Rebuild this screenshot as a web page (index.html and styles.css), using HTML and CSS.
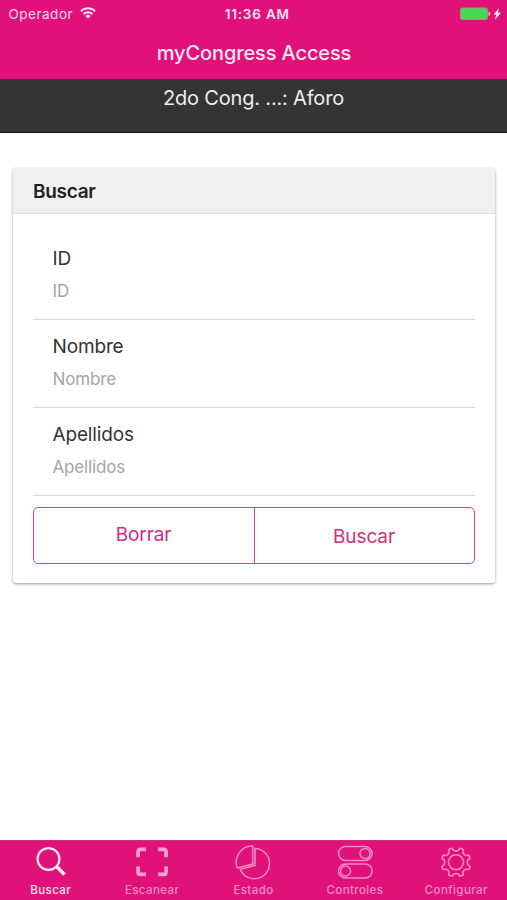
FILE: index.html
```html
<!DOCTYPE html>
<html lang="es">
<head>
<meta charset="utf-8">
<title>myCongress Access</title>
<link rel="stylesheet" href="styles.css">
</head>
<body>
<header class="top">
  <div class="status">
    <div class="carrier"><span>Operador</span>
      <svg width="16" height="12" viewBox="0 0 16 12" fill="none" stroke="currentColor" stroke-width="2"><path d="M1 4.200a10 10 0 0 1 14 0M3.400 7.100a6.500 6.500 0 0 1 9.200 0"/><path d="M8 11.500 5.300 9a3.900 3.900 0 0 1 5.400 0z" fill="currentColor" stroke="none"/></svg>
    </div>
    <span class="time">11:36 AM</span>
    <svg class="battery" width="42" height="14" viewBox="0 0 42 14"><rect x="1.500" y="1" width="27" height="11.500" rx="1.800" fill="#44d952" stroke="#b08b80"/><path d="M29.500 4.800q2 0 2 2t-2 2z" fill="#f5b4d4"/><path d="M40 1 34.500 7.800h2.700l-1.200 5L42 5.800h-3z" fill="#ffe3f1"/></svg>
  </div>
  <h1 class="title">myCongress Access</h1>
</header>
<div class="event"><span>2do Cong. ...: Aforo</span></div>
<main class="content">
  <section class="card">
    <h2 class="card-title"><span>Buscar</span></h2>
    <form class="form">
      <div class="field"><span class="label">ID</span><span class="hint">ID</span></div>
      <div class="field"><span class="label">Nombre</span><span class="hint">Nombre</span></div>
      <div class="field"><span class="label">Apellidos</span><span class="hint">Apellidos</span></div>
      <div class="actions"><button type="button"><span>Borrar</span></button><button type="button" class="search"><span>Buscar</span></button></div>
    </form>
  </section>
</main>
<nav class="tabs">
  <a class="tab active"><svg width="36" height="36" viewBox="0 0 36 36" fill="none" stroke="currentColor"><circle cx="15.500" cy="15" r="10.900" stroke-width="2.200"/><path d="m23.200 22.200 8.300 8.300" stroke-width="3.600"/></svg><span>Buscar</span></a>
  <a class="tab"><svg width="36" height="36" viewBox="0 0 36 36" fill="none" stroke="#fb9dcf" stroke-width="3.800"><path d="M4.100 13.300V8q0-2.600 2.600-2.600h5.300M24.200 5.400h5.300q2.600 0 2.600 2.600v5.300M32.100 22.500v5.300q0 2.600-2.600 2.600h-5.300M12 30.400H6.700q-2.600 0-2.600-2.600v-5.300"/></svg><span>Escanear</span></a>
  <a class="tab"><svg width="36" height="36" viewBox="0 0 36 36" fill="none" stroke="currentColor" stroke-width="1.500"><path d="M17.700 2.100v18L2.300 23.900A16 16 0 0 1 17.700 2.100zM20 4.400a15.200 15.200 0 1 1-14.800 20.800L20 21.500z"/></svg><span>Estado</span></a>
  <a class="tab"><svg width="36" height="36" viewBox="0 0 36 36" fill="none" stroke="currentColor" stroke-width="1.500"><rect x="1.500" y="2.400" width="33.600" height="14" rx="7"/><circle cx="28.100" cy="9.400" r="5"/><rect x="1.500" y="20" width="33.600" height="14" rx="7"/><circle cx="8.500" cy="27" r="5"/></svg><span>Controles</span></a>
  <a class="tab"><svg width="36" height="36" viewBox="0 0 36 36" fill="none" stroke="currentColor" stroke-width="1.500" stroke-linejoin="round"><circle cx="18" cy="18.300" r="7.500"/><path d="M14.200 4.300C15.500 7.900 20.500 7.900 21.800 4.300Q24.100 4.500 25.300 5.700C23.700 9.200 27.100 12.600 30.600 11Q31.800 12.200 32 14.500C28.400 15.800 28.400 20.800 32 22.100Q31.800 24.400 30.600 25.600C27.100 24 23.700 27.400 25.300 30.900Q24.100 32.100 21.800 32.300C20.500 28.700 15.500 28.700 14.200 32.300Q11.900 32.100 10.700 30.900C12.300 27.400 8.900 24 5.400 25.600Q4.200 24.400 4 22.100C7.600 20.800 7.600 15.800 4 14.500Q4.200 12.200 5.400 11C8.900 12.600 12.300 9.200 10.700 5.700Q11.900 4.500 14.200 4.300Z"/></svg><span>Configurar</span></a>
</nav>
</body>
</html>
```

FILE: styles.css
```css
* { box-sizing: border-box; }
body {
  margin: 0;
  height: 900px;
  display: flex;
  flex-direction: column;
  background: #fff;
  font-family: Inter, "Liberation Sans", sans-serif;
  color: #333;
}
.top { height: 79px; background: #e01279; color: #fff; flex: none; }
.status {
  height: 27px;
  padding: 0 5px 0 8.5px;
  display: grid;
  grid-template-columns: 1fr auto 1fr;
  align-items: center;
  font-size: 13.5px;
}
.carrier { display: flex; align-items: center; gap: 6px; color: #ffd9ec; letter-spacing: .5px; }
.carrier svg { margin: -2px 0 0 1px; }
.time { font-weight: 600; color: #ffe3f1; letter-spacing: .8px; margin-left: 4px; }
.battery { justify-self: end; margin-right: 1px; }
.title {
  margin: 0;
  font-size: 20px;
  font-weight: 500;
  line-height: 52px;
  letter-spacing: -.12px;
  padding-left: 1px;
  text-align: center;
  color: #ffe6f3;
}
.event {
  height: 54px;
  flex: none;
  background: #343434;
  border-bottom: 1px solid #181818;
  color: #eee;
  font-size: 20px;
  line-height: 38px;
  letter-spacing: -.18px;
  text-align: center;
}
.content { flex: 1; padding: 35px 12px 0 13px; }
.card {
  height: 415px;
  border-radius: 3px;
  background: #fff;
  box-shadow: 0 1px 3px rgba(0, 0, 0, .4);
}
.card-title {
  margin: 0;
  height: 46px;
  padding-left: 20px;
  border-bottom: 1px solid #dcdcdc;
  border-radius: 3px 3px 0 0;
  background: #f0f0f0;
  font-size: 19px;
  font-weight: 600;
  line-height: 47px;
  letter-spacing: -.3px;
  color: #222;
}
.form { padding: 18px 20px 0; }
.field {
  height: 88px;
  padding: 14px 0 0 19.5px;
  border-bottom: 1px solid #d8d8d8;
  display: flex;
  flex-direction: column;
}
.label { font-size: 19px; line-height: 26px; letter-spacing: -.15px; }
.hint { margin-top: 7px; font-size: 17px; line-height: 24px; letter-spacing: -.15px; color: #a5a5a5; }
.actions {
  margin-top: 11px;
  height: 57px;
  display: grid;
  grid-template-columns: 1fr 1fr;
  border: 1.5px solid #dc4090;
  border-radius: 5px;
}
.actions button {
  border: 0;
  padding: 0 1px 3px 0;
  background: none;
  font: 19px Inter, "Liberation Sans", sans-serif;
  letter-spacing: -.1px;
  color: #d52a80;
}
.actions .search { border-left: 1px solid #dc4090; padding: 2px 1px 0 0; }
.tabs {
  height: 60px;
  flex: none;
  display: grid;
  grid-template-columns: repeat(5, 1fr);
  background: #e01279;
  border-top: 1px solid #cf2b7b;
}
.tab {
  padding-top: 3px;
  display: flex;
  flex-direction: column;
  align-items: center;
  font-size: 11.5px;
  font-weight: 500;
  line-height: 18px;
  letter-spacing: .4px;
  color: #f88cc5;
}
.tab span { margin-top: 1px; }
.tab.active { color: #ffe9f5; }
```
